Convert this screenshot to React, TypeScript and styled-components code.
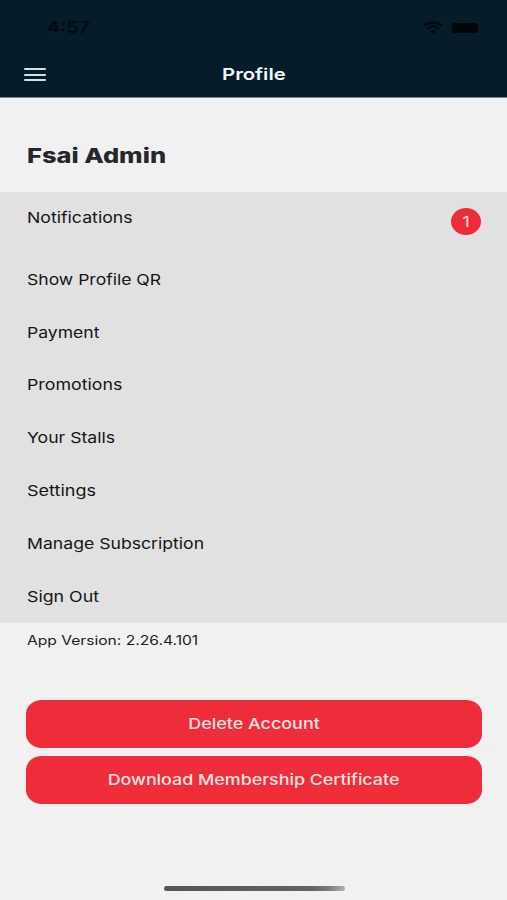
import React from "react";
import styled, { createGlobalStyle } from "styled-components";

const GlobalStyle = createGlobalStyle`
  * { box-sizing: border-box; }
  body { margin: 0; background: #f1f1f1; font-family: Inter, "Liberation Sans", sans-serif; }
`;

const Screen = styled.main`
  display: flex;
  flex-direction: column;
  width: 100%;
  height: 900px;
  background: #f1f1f1;
  overflow: hidden;
`;

const Header = styled.header`
  height: 98px;
  background: #061c29;
  border-bottom: 1px solid #77848c;
`;

const StatusBar = styled.div`
  display: flex;
  align-items: center;
  justify-content: space-between;
  height: 52px;
  padding: 3px 24px 0 47px;
  color: #010a12;
`;

const StatusIcons = styled.div`
  display: flex;
  align-items: center;
  gap: 8px;
`;

const NavBar = styled.div`
  display: grid;
  grid-template-columns: 60px 1fr 60px;
  align-items: center;
  height: 45px;
  color: #f3f8fa;
  text-align: center;
`;

const Title = styled.div`
  padding-bottom: 2px;
`;

const MenuButton = styled.button`
  display: flex;
  flex-direction: column;
  gap: 3.5px;
  width: 22px;
  margin-left: 24px;
  padding: 0;
  border: 0;
  background: none;
`;

const MenuLine = styled.span`
  height: 2px;
  border-radius: 1px;
  background: #cfe2ea;
`;

const Label = styled.span<{
  $size: number;
  $weight?: number;
  $wide?: number;
  $center?: boolean;
}>`
  display: inline-block;
  font-size: ${(p) => p.$size}px;
  font-weight: ${(p) => p.$weight ?? 420};
  line-height: 20px;
  white-space: nowrap;
  transform: scaleX(${(p) => p.$wide ?? 1.18});
  transform-origin: ${(p) => (p.$center ? "center" : "left")};
`;

const NameSection = styled.section`
  display: flex;
  align-items: center;
  height: 94px;
  padding: 22px 27px 0;
  color: #25272c;
`;

const Menu = styled.nav`
  display: flex;
  flex-direction: column;
  height: 430.5px;
  background: #e1e1e1;
  color: #151515;
`;

const MenuRow = styled.a<{ $tall?: boolean }>`
  display: flex;
  flex-shrink: 0;
  align-items: flex-start;
  justify-content: space-between;
  height: ${(p) => (p.$tall ? 61.5 : 52.8)}px;
  padding: 16.4px 26px 0 27px;
`;

const Badge = styled.span`
  display: flex;
  align-items: center;
  justify-content: center;
  width: 30px;
  height: 27px;
  border-radius: 50%;
  background: #ee2b39;
  color: #ffe6e4;
`;

const Version = styled.div`
  height: 77px;
  padding: 6px 27px 0;
  color: #1c1c1c;
`;

const Actions = styled.div`
  display: flex;
  flex-direction: column;
  gap: 8.5px;
  padding: 0 25px 0 26px;
`;

const ActionButton = styled.button`
  height: 48px;
  padding: 0;
  border: 0;
  border-radius: 16px / 14px;
  background: #ef2c39;
  color: #ffe4e3;
  font-family: inherit;
`;

const HomeIndicator = styled.div`
  width: 181px;
  height: 5px;
  margin: auto auto 9px 164px;
  border-radius: 3px;
  background: linear-gradient(90deg, #555 0%, #626262 80%, #777 90%, #b0b0b0 100%);
`;

const items = [
  { text: "Show Profile QR", wide: 1.17 },
  { text: "Payment", wide: 1.17 },
  { text: "Promotions", wide: 1.185 },
  { text: "Your Stalls", wide: 1.175 },
  { text: "Settings", wide: 1.2 },
  { text: "Manage Subscription", wide: 1.175 },
  { text: "Sign Out", wide: 1.185 },
];

const WifiIcon = () => (
  <svg width="20" height="13" viewBox="0 0 21 14" fill="none" stroke="currentColor" strokeWidth="2.6">
    <path d="M1 5C6 .4 15 .4 20 5M4.2 8.4C8 5.2 13 5.2 16.8 8.4" />
    <path d="M7.2 11Q10.5 8.6 13.8 11L10.5 14Z" fill="currentColor" stroke="none" />
  </svg>
);

const BatteryIcon = () => (
  <svg width="32" height="12" viewBox="0 0 32 12">
    <rect x="1" y="1" width="26" height="10" rx="2.5" fill="#000509" />
    <path d="M28.5 4.2Q30 6 28.5 7.8Z" fill="#04131d" />
  </svg>
);

export default function App() {
  return (
    <>
      <GlobalStyle />
      <Screen>
        <Header>
          <StatusBar>
            <Label $size={15.5} $weight={600} $wide={1.26}>4:57</Label>
            <StatusIcons>
              <WifiIcon />
              <BatteryIcon />
            </StatusIcons>
          </StatusBar>
          <NavBar>
            <MenuButton aria-label="Menu">
              <MenuLine />
              <MenuLine />
              <MenuLine />
            </MenuButton>
            <Title><Label $size={16.5} $weight={600} $wide={1.23} $center>Profile</Label></Title>
          </NavBar>
        </Header>
        <NameSection>
          <Label $size={20.5} $weight={800} $wide={1.24}>Fsai Admin</Label>
        </NameSection>
        <Menu>
          <MenuRow $tall>
            <Label $size={15}>Notifications</Label>
            <Badge><Label $size={15} $center>1</Label></Badge>
          </MenuRow>
          {items.map((item) => (
            <MenuRow key={item.text}>
              <Label $size={15} $wide={item.wide}>{item.text}</Label>
            </MenuRow>
          ))}
        </Menu>
        <Version>
          <Label $size={12.8} $wide={1.22}>App Version: 2.26.4.101</Label>
        </Version>
        <Actions>
          <ActionButton><Label $size={15} $weight={500} $wide={1.195} $center>Delete Account</Label></ActionButton>
          <ActionButton><Label $size={15} $weight={500} $wide={1.19} $center>Download Membership Certificate</Label></ActionButton>
        </Actions>
        <HomeIndicator />
      </Screen>
    </>
  );
}
